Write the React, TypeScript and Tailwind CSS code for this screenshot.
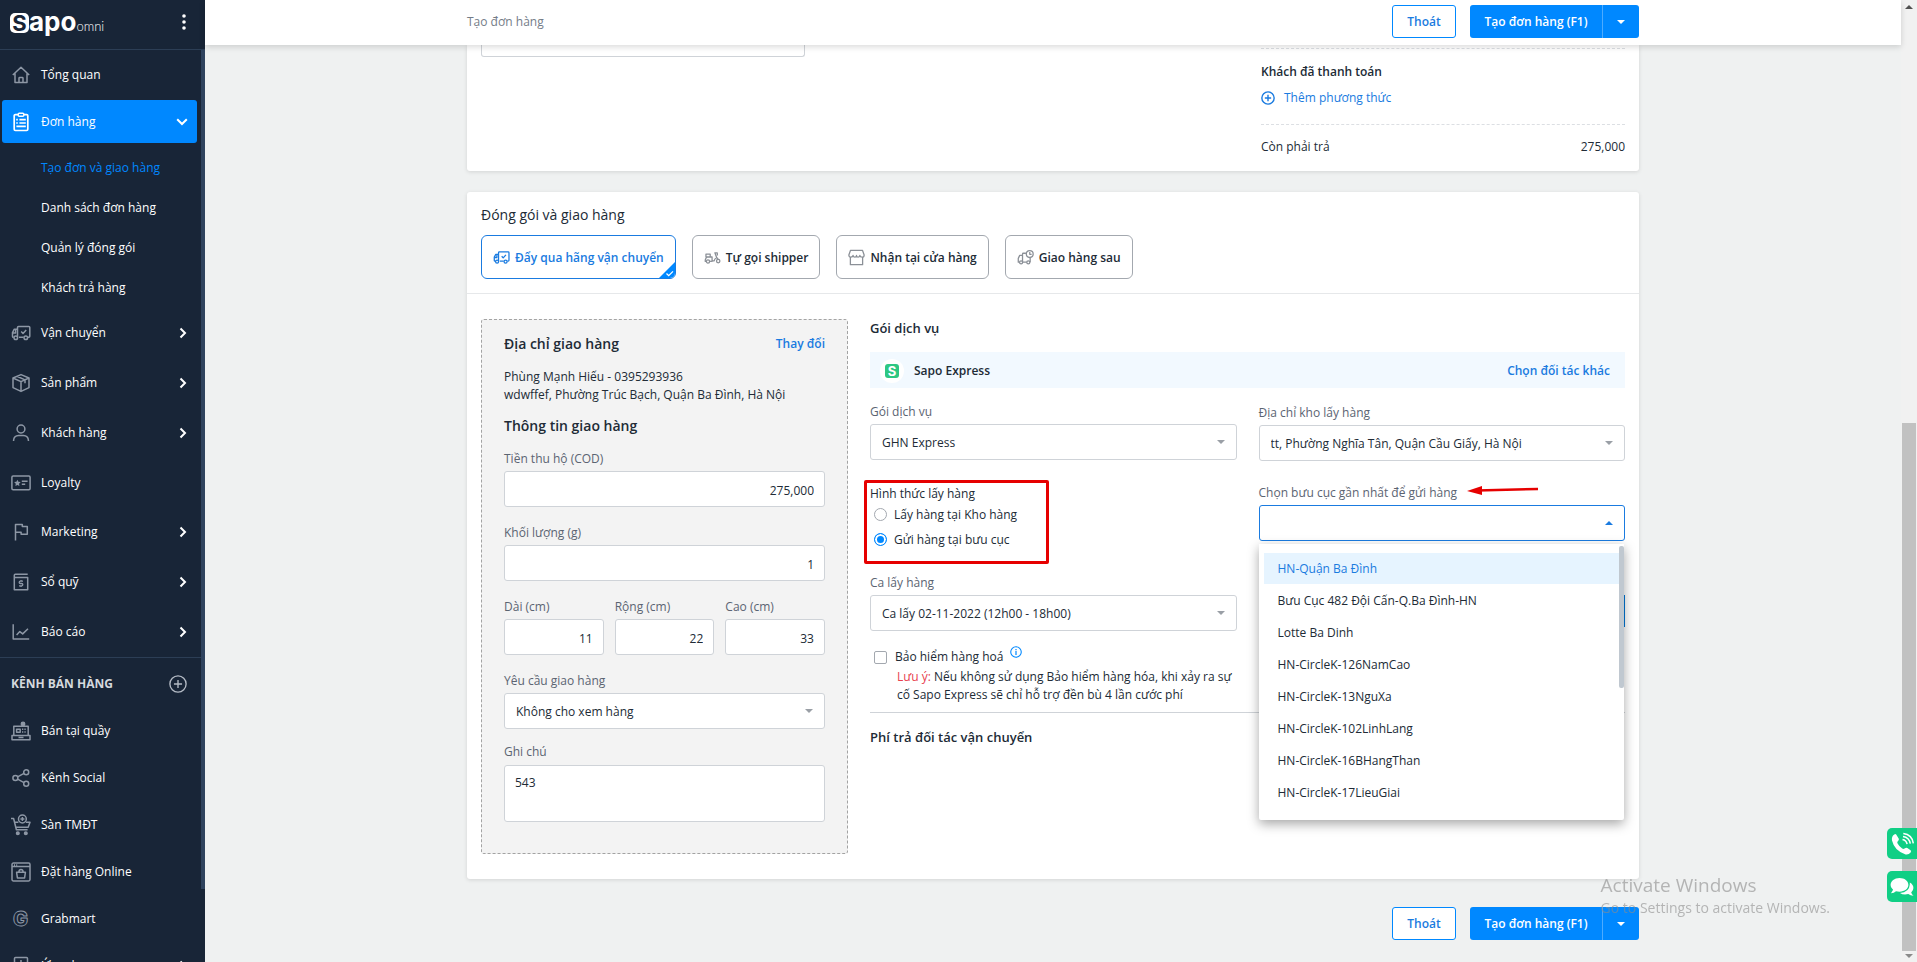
import React, { useState } from 'react';

type IconProps = { children: React.ReactNode; className?: string; box?: string };

const Icon: React.FC<IconProps> = ({ children, className = 'w-5 h-5', box = '0 0 20 20' }) => (
  <svg
    viewBox={box}
    className={`shrink-0 ${className}`}
    fill="none"
    stroke="currentColor"
    strokeWidth="1.5"
    strokeLinejoin="round"
    aria-hidden="true"
  >
    {children}
  </svg>
);

const truckPaths = (
  <>
    <path d="M6.5 14.2V4.4q0-1 1-1h10.3q1 0 1 1v8.8q0 1-1 1h-.8M12.6 14.2H8" />
    <path d="M2.7 14.2H2.3q-.8 0-.8-.8V9.6l1.8-3.4h3.2M2 10h2.6V7" />
    <circle cx="4.8" cy="14.8" r="1.8" />
    <circle cx="14.8" cy="14.8" r="1.8" />
    <path d="m10.2 8.6 1.8 1.9 3.2-3.6" />
  </>
);

const icons = {
  home: (
    <Icon>
      <path d="M1.8 10 10 2.2 18.2 10M4 8.4v9.1h12V8.4M8 17.4v-4.2q0-.7.7-.7h2.6q.7 0 .7.7v4.2" />
    </Icon>
  ),
  order: (
    <Icon>
      <rect x="3.2" y="2.6" width="13.6" height="15.9" rx="1.2" strokeWidth="1.7" />
      <rect x="7.2" y="1.2" width="5.6" height="3" rx="1" fill="#0088ff" />
      <path d="M8.4 7.6h6.4M8.4 11h6.4M5.4 14.4h9.4M5.2 7.6h1.6M5.2 11h1.6" strokeWidth="1.7" />
    </Icon>
  ),
  truck: <Icon>{truckPaths}</Icon>,
  box: (
    <Icon>
      <path d="M10 1.6 18 5v9.6L10 18.4 2 14.6V5zM2 5l8 3.6L18 5M10 8.6v9.8M6 3.3l8 3.6v3.4" />
    </Icon>
  ),
  user: (
    <Icon>
      <circle cx="10" cy="6" r="3.9" />
      <path d="M2.6 18v-1q.4-4.4 5-4.6h4.8q4.6.2 5 4.6v1" />
    </Icon>
  ),
  card: (
    <Icon>
      <rect x=".9" y="3" width="18.2" height="13.8" rx="1.2" />
      <path d="m6.4 6.7 1 2.1 2.3.3-1.7 1.6.4 2.3-2-1.1-2 1.1.4-2.3-1.7-1.6 2.3-.3z" fill="currentColor" stroke="none" />
      <path d="M10.8 8.3h5.8M10.8 11.3h3.4" />
    </Icon>
  ),
  flag: (
    <Icon>
      <path d="M4.5 18.5V2.5h6.8v2h5v7.8h-6.2v-2H4.5" />
    </Icon>
  ),
  fund: (
    <Icon>
      <path d="M3.3 5.4h13.4v12.3H3.3zM3.3 5.4V3.2q0-1 1-1h12.4" />
      <path d="M12 9.2H9.4q-1.2 0-1.2 1.2 0 1.1 1.2 1.1h1.2q1.2 0 1.2 1.1 0 1.2-1.2 1.2H8M10 8v1.2M10 13.800V15" strokeWidth="1.3" />
    </Icon>
  ),
  chart: (
    <Icon>
      <path d="M2.2 2.2v14.9h16M5.6 13l3.2-3.4 2.9 2.3L17 6.700" />
    </Icon>
  ),
  pos: (
    <Icon>
      <path d="M1 14.5h18v4.200H1zM2.800 14.500V5.300h14.400v9.200M7.500 16.600h5" />
      <path d="M5.6 8.200h3.600v3H5.600zM11 8.200h1.300M13.400 8.200h1.300M11 11h1.300M13.400 11h1.300" />
      <circle cx="12" cy="3" r="1.7" fill="currentColor" />
    </Icon>
  ),
  share: (
    <Icon>
      <circle cx="15.2" cy="4.2" r="2.5" />
      <circle cx="4.4" cy="10" r="2.5" />
      <circle cx="15.2" cy="15.8" r="2.5" />
      <path d="m6.6 8.800 6.400-3.400M6.600 11.200l6.400 3.400" />
    </Icon>
  ),
  cart: (
    <Icon className="w-[20px] h-[22px]" box="0 0 20 22">
      <path d="M0 4.500h2.600l2.800 11.200h11.200M3.800 8.200h3.600M15 8.200h4l-1.800 5H5.200" />
      <circle cx="11.4" cy="5" r="3.9" />
      <path d="M11.400 3v4M9.400 5h4" />
      <circle cx="6.8" cy="19.3" r="1.3" fill="currentColor" />
      <circle cx="14.8" cy="19.3" r="1.3" fill="currentColor" />
    </Icon>
  ),
  online: (
    <Icon>
      <rect x="1" y="1" width="18" height="18" rx="1.4" />
      <path d="M1 4.600h18M3 2.900h1M5.200 2.900h1" />
      <path d="M5.600 10.300h8.800l-.8 5.600H6.400zM7.800 10.200q.3-2.600 2.200-2.600t2.200 2.600" />
    </Icon>
  ),
  grab: (
    <Icon className="w-5 h-5 overflow-visible">
      <text x="2" y="17" fontSize="20" fontFamily="Inter, sans-serif" fontWeight="800" strokeWidth="1">G</text>
    </Icon>
  ),
  app: (
    <Icon>
      <rect x="3.5" y="1.5" width="13" height="16" rx="1" />
      <path d="M10 4v8M6 9h8" />
    </Icon>
  ),
};

const ChevronRight = () => (
  <svg viewBox="0 0 8 12" className="w-2 h-3 ml-auto mr-[14px]" fill="none" stroke="white" strokeWidth="2" aria-hidden="true">
    <path d="M1.500 1.500 6 6l-4.500 4.500" />
  </svg>
);

const mainMenu = [
  { label: 'Vận chuyển', icon: icons.truck, more: true },
  { label: 'Sản phẩm', icon: icons.box, more: true },
  { label: 'Khách hàng', icon: icons.user, more: true },
  { label: 'Loyalty', icon: icons.card, more: false },
  { label: 'Marketing', icon: icons.flag, more: true },
  { label: 'Sổ quỹ', icon: icons.fund, more: true },
  { label: 'Báo cáo', icon: icons.chart, more: true },
];

const orderMenu = ['Tạo đơn và giao hàng', 'Danh sách đơn hàng', 'Quản lý đóng gói', 'Khách trả hàng'];

const channels = [
  { label: 'Bán tại quầy', icon: icons.pos, more: false },
  { label: 'Kênh Social', icon: icons.share, more: false },
  { label: 'Sàn TMĐT', icon: icons.cart, more: false },
  { label: 'Đặt hàng Online', icon: icons.online, more: false },
  { label: 'Grabmart', icon: icons.grab, more: false },
  { label: 'Ứng dụng', icon: icons.app, more: true },
];

const postOffices = [
  'HN-Quận Ba Đình',
  'Bưu Cục 482 Đội Cấn-Q.Ba Đình-HN',
  'Lotte Ba Dinh',
  'HN-CircleK-126NamCao',
  'HN-CircleK-13NguXa',
  'HN-CircleK-102LinhLang',
  'HN-CircleK-16BHangThan',
  'HN-CircleK-17LieuGiai',
];

const Sidebar = () => (
  <aside className="w-[205px] shrink-0 bg-[#182537] text-white overflow-hidden flex flex-col">
    <div className="h-[50px] shrink-0 border-b border-[#2c3e55] flex items-center pl-[10px] pr-[19px] pb-[5px]">
      <a href="#home" className="flex items-baseline">
        <span className="w-[19px] h-5 rounded-[5px] bg-white text-[#182537] font-['Inter'] font-bold text-[22px] leading-5 text-center">S</span>
        <span className="font-['Inter'] font-bold text-[26px] leading-6">apo</span>
        <span className="font-['Lato'] font-light text-[13px] leading-4">omni</span>
      </a>
      <button className="ml-auto" aria-label="Menu">
        <svg viewBox="0 0 4 16" className="w-1 h-4" fill="white"><circle cx="2" cy="2" r="1.8" /><circle cx="2" cy="8" r="1.8" /><circle cx="2" cy="14" r="1.8" /></svg>
      </button>
    </div>

    <div className="flex flex-1 min-h-0">
      <nav className="flex-1 min-w-0">
        <a href="#overview" className="flex items-center gap-[10px] h-[50px] pl-[11px]">
          <span className="text-[#8d97a5]">{icons.home}</span>Tổng quan
        </a>
        <a href="#orders" className="flex items-center gap-[10px] h-[43px] ml-[2px] mr-1 pl-[9px] rounded-[3px] bg-[#0088ff]">
          {icons.order}Đơn hàng
          <svg viewBox="0 0 12 8" className="w-3 h-2 ml-auto mr-[9px]" fill="none" stroke="white" strokeWidth="2" aria-hidden="true">
            <path d="M1.200 1.200 6 6l4.800-4.800" />
          </svg>
        </a>
        <div className="pt-[5px]">
          {orderMenu.map((label, i) => (
            <a key={label} href="#order-sub" className={`flex items-center h-10 pl-[41px] ${i === 0 ? 'text-[#0088ff]' : ''}`}>
              {label}
            </a>
          ))}
        </div>
        {mainMenu.map(item => (
          <a key={item.label} href="#menu" className={`flex items-center gap-[10px] pl-[11px] ${item.more ? 'h-[50px]' : 'h-[49px]'}`}>
            <span className="text-[#8d97a5]">{item.icon}</span>
            {item.label}
            {item.more && <ChevronRight />}
          </a>
        ))}
        <div className="flex items-center h-[50px] border-t border-[#2c3e55] pl-[11px] pr-[14px] pt-[2px]">
          <span className="font-bold text-[#d5d9de]">KÊNH BÁN HÀNG</span>
          <button className="ml-auto text-[#b4bbc5]" aria-label="Thêm kênh">
            <Icon className="w-[18px] h-[18px]"><circle cx="10" cy="10" r="9" /><path d="M10 5.500v9M5.500 10h9" /></Icon>
          </button>
        </div>
        {channels.map(item => (
          <a key={item.label} href="#channel" className="flex items-center gap-[10px] h-[47px] pl-[11px]">
            <span className="text-[#8d97a5]">{item.icon}</span>
            {item.label}
            {item.more && <ChevronRight />}
          </a>
        ))}
      </nav>
      <div className="w-1 h-[92%] bg-[#2f435e]"></div>
    </div>
  </aside>
);

const ActionButtons = () => (
  <div className="flex gap-[14px] h-[33px]">
    <button className="w-16 rounded-[3px] border border-[#0088ff] bg-white text-[#1a7be0] font-semibold">Thoát</button>
    <div className="flex rounded-[3px] bg-[#0088ff] text-white">
      <button className="w-[133px] font-semibold border-r border-[#4dabff]">Tạo đơn hàng (F1)</button>
      <button className="w-9 flex items-center justify-center" aria-label="Tùy chọn khác">
        <svg viewBox="0 0 8 4" className="w-2 h-1" fill="white"><path d="M0 0h8L4 4z" /></svg>
      </button>
    </div>
  </div>
);

type FieldProps = { id: string; label: string; value: string };

const TextField: React.FC<FieldProps> = ({ id, label, value }) => (
  <div className="min-w-0">
    <label htmlFor={id} className="block pt-px mb-[3px] text-[#5b6472]">{label}</label>
    <input id={id} defaultValue={value} className="block w-full h-9 rounded-[3px] border border-[#cfd3d8] bg-white px-[10px] pt-[2px] text-right" />
  </div>
);

const SelectField: React.FC<FieldProps & { open?: boolean }> = ({ id, label, value, open }) => (
  <div>
    <label htmlFor={id} className="block pt-px mb-[3px] text-[#5b6472]">{label}</label>
    <div className="relative">
      <select
        id={id}
        className={`block w-full h-9 appearance-none rounded-[3px] border bg-white px-[11px] pt-[2px] ${open ? 'border-[#1a7be0]' : 'border-[#cfd3d8]'}`}
      >
        <option>{value}</option>
      </select>
      <svg
        viewBox="0 0 8 4"
        className={`absolute right-3 top-4 w-2 h-1 pointer-events-none ${open ? 'rotate-180 fill-[#1a7be0]' : 'fill-[#9a9fa6]'}`}
      >
        <path d="M0 0h8L4 4z" />
      </svg>
    </div>
  </div>
);

const deliveryTabs = [
  { label: 'Đẩy qua hãng vận chuyển', icon: <Icon className="w-[17px] h-[17px]">{truckPaths}</Icon> },
  {
    label: 'Tự gọi shipper',
    icon: (
      <Icon className="w-[17px] h-[17px]">
        <path d="M2.300 6h5v3.400h-5zM2.600 14.500H1.400q0-4.600 3.800-5.100h4.300v4.500h2.500q.2-2.600 3-3.600L12.800 4.500h2.800l.2 3.200M15.600 10.400l1 2" />
        <circle cx="4.7" cy="14.6" r="1.9" />
        <circle cx="16.7" cy="14.2" r="2" />
        <path d="M6.600 14.500h3.400" />
      </Icon>
    ),
  },
  {
    label: 'Nhận tại cửa hàng',
    icon: (
      <Icon className="w-[17px] h-[17px]">
        <path d="M3 1.500h14l2 5.500q0 2.600-2.400 2.600T14 7.600q-.4 2-2.200 2T10 7.600q0 2-1.900 2T6 7.600q-.3 2-2.600 2T1 7zM2.800 10v8.500h14.400V10" />
      </Icon>
    ),
  },
  {
    label: 'Giao hàng sau',
    icon: (
      <Icon className="w-[17px] h-[17px]">
        <path d="M10.500 5H7.500q-1 0-1 1v9M2.800 15.500H1.500V11l1.700-3.500h3.300M7 15.500h4.500M15.500 10.500v5" />
        <circle cx="4.8" cy="15.7" r="1.8" />
        <circle cx="13.3" cy="15.7" r="1.8" />
        <circle cx="15" cy="6" r="4" />
        <path d="M15 3.600v2.600h2.200" />
      </Icon>
    ),
  },
];

const App: React.FC = () => {
  const [pickup, setPickup] = useState('office');
  const [insured, setInsured] = useState(false);

  return (
    <div className="flex h-screen overflow-hidden bg-[#eff1f1] font-['Open_Sans','Noto_Sans',sans-serif] text-[12px] leading-[18px] text-[#212b36]">
      <Sidebar />

      <div className="flex-1 min-w-0 flex flex-col">
        <header className="relative z-10 h-[45px] shrink-0 bg-white shadow-[0_2px_6px_rgba(0,0,0,0.15)]">
          <div className="max-w-[1172px] mx-auto flex items-start justify-between pt-[5px]">
            <h1 className="pt-2 text-[#747c87]">Tạo đơn hàng</h1>
            <ActionButtons />
          </div>
        </header>

        <main className="flex-1 min-h-0 overflow-hidden">
          <div className="max-w-[1172px] mx-auto">
            {/* Payment summary */}
            <section className="bg-white rounded-b-[3px] shadow-[0_1px_4px_rgba(0,0,0,0.12)] px-[14px] pb-[14px] flex justify-between items-start">
              <textarea aria-label="Ghi chú đơn hàng" className="block w-[324px] h-3 resize-none rounded-b-[3px] border border-t-0 border-[#cfd3d8]"></textarea>
              <div className="w-[364px] pt-[3px] leading-5">
                <div className="border-t border-dashed border-[#dcdfe3] mb-[13px]"></div>
                <p className="font-semibold">Khách đã thanh toán</p>
                <a href="#payment" className="flex items-center gap-[9px] mt-[6px] text-[#1a7be0]">
                  <Icon className="w-[14px] h-[14px]"><circle cx="10" cy="10" r="8.8" strokeWidth="2" /><path d="M10 5.500v9M5.500 10h9" strokeWidth="2" /></Icon>
                  Thêm phương thức
                </a>
                <div className="flex justify-between mt-4 pt-3 border-t border-dashed border-[#dcdfe3]">
                  <span>Còn phải trả</span>
                  <span>275,000</span>
                </div>
              </div>
            </section>

            {/* Packing and delivery */}
            <section className="mt-[21px] bg-white rounded-[3px] shadow-[0_1px_4px_rgba(0,0,0,0.12)]">
              <div className="px-[14px] pt-[13px] pb-[14px] border-b border-[#e6e8ea]">
                <h2 className="text-[14px] leading-5">Đóng gói và giao hàng</h2>
                <div className="flex gap-4 mt-[10px]">
                  {deliveryTabs.map((tab, i) => (
                    <button
                      key={tab.label}
                      className={`relative flex items-center gap-[5px] h-11 px-[11px] pt-px rounded-[6px] border overflow-hidden font-semibold ${i === 0 ? 'border-[#1a7be0] text-[#1a7be0]' : 'border-[#a3a8af]'}`}
                    >
                      <span className={i === 0 ? '' : 'text-[#8b9097]'}>{tab.icon}</span>
                      {tab.label}
                      {i === 0 && (
                        <svg viewBox="0 0 16 16" className="absolute right-0 bottom-0 w-4 h-4" aria-hidden="true">
                          <path d="M16 0v16H0z" fill="#0088ff" />
                          <path d="m7.500 11.500 2.200 2.200 4.300-4.300" fill="none" stroke="white" strokeWidth="1.3" />
                        </svg>
                      )}
                    </button>
                  ))}
                </div>
              </div>

              <div className="flex items-start gap-[22px] px-[14px] py-[25px]">
                <div className="w-[367px] shrink-0 rounded-[3px] border border-dashed border-[#a3a3a3] bg-[#f3f3f3] px-[22px] pt-[14px] pb-[31px]">
                  <div className="flex justify-between leading-5">
                    <h3 className="text-[14px] font-semibold">Địa chỉ giao hàng</h3>
                    <a href="#change" className="font-semibold text-[#1a7be0]">Thay đổi</a>
                  </div>
                  <p className="mt-[14px]">Phùng Mạnh Hiếu - 0395293936</p>
                  <p>wdwffef, Phường Trúc Bạch, Quận Ba Đình, Hà Nội</p>
                  <h3 className="mt-3 mb-[13px] text-[14px] leading-5 font-semibold">Thông tin giao hàng</h3>
                  <div className="flex flex-col gap-4">
                    <TextField id="cod" label="Tiền thu hộ (COD)" value="275,000" />
                    <TextField id="weight" label="Khối lượng (g)" value="1" />
                    <div className="grid grid-cols-3 gap-[11px]">
                      <TextField id="length" label="Dài (cm)" value="11" />
                      <TextField id="width" label="Rộng (cm)" value="22" />
                      <TextField id="height" label="Cao (cm)" value="33" />
                    </div>
                    <SelectField id="requirement" label="Yêu cầu giao hàng" value="Không cho xem hàng" />
                  </div>
                  <div className="mt-[14px]">
                    <label htmlFor="note" className="block mb-1 text-[#5b6472]">Ghi chú</label>
                    <textarea id="note" defaultValue="543" className="block w-full h-[57px] resize-none rounded-[3px] border border-[#cfd3d8] bg-white px-[10px] pt-2" />
                  </div>
                </div>

                <div className="flex-1 min-w-0">
                  <h3 className="text-[13px] leading-[18px] font-semibold">Gói dịch vụ</h3>
                  <div className="flex items-center h-9 mt-[15px] pl-[10px] pr-[15px] pt-px bg-[#f2f9ff]">
                    <span className="w-6 h-6 rounded-full bg-white flex items-center justify-center">
                      <span className="w-[14px] h-[14px] rounded-[3px] bg-[#2dc783] text-white font-['Inter'] font-bold text-[13px] leading-[14px] text-center">S</span>
                    </span>
                    <span className="ml-[10px] font-semibold">Sapo Express</span>
                    <a href="#partner" className="ml-auto font-semibold text-[#1a7be0]">Chọn đối tác khác</a>
                  </div>

                  <div className="grid grid-cols-2 gap-[22px] mt-[14px]">
                    <div>
                      <SelectField id="package" label="Gói dịch vụ" value="GHN Express" />
                      <div className="relative mt-[26px]">
                        <fieldset>
                          <legend className="leading-4">Hình thức lấy hàng</legend>
                          <label className="flex items-center gap-[7px] h-[25px] pl-1">
                            <input
                              type="radio"
                              name="pickup"
                              checked={pickup === 'store'}
                              onChange={() => setPickup('store')}
                              className="w-[13px] h-[13px] appearance-none rounded-full border border-[#a3a8af] checked:border-[#0088ff] checked:bg-[#0088ff] checked:shadow-[inset_0_0_0_2px_white]"
                            />
                            Lấy hàng tại Kho hàng
                          </label>
                          <label className="flex items-center gap-[7px] h-[25px] pl-1">
                            <input
                              type="radio"
                              name="pickup"
                              checked={pickup === 'office'}
                              onChange={() => setPickup('office')}
                              className="w-[13px] h-[13px] appearance-none rounded-full border border-[#a3a8af] checked:border-[#0088ff] checked:bg-[#0088ff] checked:shadow-[inset_0_0_0_2px_white]"
                            />
                            Gửi hàng tại bưu cục
                          </label>
                        </fieldset>
                        <div className="absolute -left-[6px] -top-[6px] w-[185px] h-[84px] border-[3px] border-[#e60000] rounded-[2px] pointer-events-none"></div>
                      </div>
                      <div className="mt-[21px]">
                        <SelectField id="shift" label="Ca lấy hàng" value="Ca lấy 02-11-2022 (12h00 - 18h00)" />
                      </div>
                      <div className="flex items-center mt-[15px] pl-1">
                        <input
                          id="insurance"
                          type="checkbox"
                          checked={insured}
                          onChange={e => setInsured(e.target.checked)}
                          className="w-[13px] h-[13px] appearance-none rounded-[2px] border border-[#a3a8af] checked:bg-[#0088ff]"
                        />
                        <label htmlFor="insurance" className="ml-2">Bảo hiểm hàng hoá</label>
                        <Icon className="w-3 h-3 ml-[7px] mb-[10px] text-[#0088ff]">
                          <circle cx="10" cy="10" r="8.8" strokeWidth="1.8" /><path d="M10 8.500V15M10 5v2" strokeWidth="2" />
                        </Icon>
                      </div>
                      <p className="ml-[27px]">
                        <span className="text-[#e8424f]">Lưu ý:</span> Nếu không sử dụng Bảo hiểm hàng hóa, khi xảy ra sự cố Sapo Express sẽ chỉ hỗ trợ đền bù 4 lần cước phí
                      </p>
                    </div>

                    <div className="pt-px">
                      <SelectField id="warehouse" label="Địa chỉ kho lấy hàng" value="tt, Phường Nghĩa Tân, Quận Cầu Giấy, Hà Nội" />
                      <div className="relative mt-[22px]">
                        <SelectField id="post-office" label="Chọn bưu cục gần nhất để gửi hàng" value="" open />
                        <svg viewBox="0 0 72 12" className="absolute left-[208px] top-[2px] w-[72px] h-3" aria-hidden="true">
                          <path d="M10 5.500 71 4" stroke="#e60000" strokeWidth="2.5" />
                          <path d="M0 6 15 1v9z" fill="#e60000" />
                        </svg>
                        <ul role="listbox" aria-label="Bưu cục" className="absolute z-10 left-0 right-px top-[61px] h-[276px] py-[9px] pl-[5px] rounded-b-[2px] bg-white shadow-[0_4px_12px_rgba(0,0,0,0.35)]">
                          {postOffices.map((name, i) => (
                            <li
                              key={name}
                              role="option"
                              aria-selected={i === 0}
                              className={`h-[31px] mb-px mr-[5px] pl-[14px] leading-[32px] ${i === 0 ? 'bg-[#e6f4ff] text-[#1a7be0]' : ''}`}
                            >
                              {name}
                            </li>
                          ))}
                          <li aria-hidden="true" className="absolute right-0 top-[2px] w-[5px] h-[142px] rounded-[2px] bg-[#c0c8d0]"></li>
                        </ul>
                      </div>
                      <button aria-label="Tính phí" className="block ml-auto mt-[54px] w-24 h-8 bg-[#0078d8]"></button>
                    </div>
                  </div>

                  <div className="mt-2 pt-[15px] border-t border-[#cfd3d8]">
                    <h3 className="text-[13px] leading-[18px] font-semibold">Phí trả đối tác vận chuyển</h3>
                  </div>
                </div>
              </div>
            </section>

            <div className="flex justify-end mt-7">
              <ActionButtons />
            </div>
          </div>
        </main>
      </div>

      {/* Page scrollbar */}
      <div className="w-4 shrink-0 bg-[#f1f1f1] flex flex-col items-center justify-between py-1">
        <svg viewBox="0 0 8 4" className="w-2 h-1 mt-px fill-[#505050]"><path d="M0 4h8L4 0z" /></svg>
        <div className="w-full flex-1 flex flex-col justify-end px-px pb-[3px]">
          <div className="h-[56%] bg-[#c1c1c1]"></div>
        </div>
        <svg viewBox="0 0 8 4" className="w-2 h-1 fill-[#8a8a8a]"><path d="M0 0h8L4 4z" /></svg>
      </div>

      <div className="fixed z-20 right-0 bottom-[60px] flex flex-col gap-3">
        <button aria-label="Gọi hỗ trợ" className="w-[30px] h-[31px] rounded-l-[5px] bg-[#10cf85] flex items-center justify-center">
          <svg viewBox="0 0 24 24" className="w-6 h-6" fill="white">
            <path d="M6.200 2.600 8.800 6.800Q9.300 7.900 7.800 9.200q-1 .9-.2 2.300 1.700 3.200 4.600 5.100 1.300.8 2.400-.1 1.500-1.200 2.700-.5l3.300 2.300q1 .9 0 2.200-2 2.500-5 1.900Q4.500 19.200 2 8.600 1.300 4.300 4.300 2.400q1.200-.8 1.900.2z" />
            <path d="M12.500 7.500q3.800.6 4.600 4.600M13 4.400q6.200.8 7.300 7.300M13.300 1.400q9 1.200 10 10" fill="none" stroke="white" strokeWidth="1.5" />
          </svg>
        </button>
        <button aria-label="Chat hỗ trợ" className="w-[30px] h-[31px] rounded-l-[5px] bg-[#10cf85] flex items-center justify-center">
          <svg viewBox="0 0 24 24" className="w-6 h-6" fill="white">
            <path d="M9.500 3C4.500 3 .6 6 .6 9.800c0 2 1 3.600 2.500 4.900L1 18.200q3 0 5-1.900 1.700.4 3.500.4c5 0 8.900-3 8.900-6.900S14.500 3 9.500 3z" />
            <path d="M19.800 7.500q3.600 2 3.600 5.500 0 2.700-2.200 4.500.5 1.900 2.300 3.300-3.200 0-5.200-1.800-5 1.200-8.300-1.100 9.300-.6 9.800-8.400z" />
          </svg>
        </button>
      </div>

      <div className="fixed z-20 right-[87px] bottom-[43px] pointer-events-none text-[#8c8c8c]/60">
        <p className="text-[19px] leading-6">Activate Windows</p>
        <p className="text-[14px] leading-[22px]">Go to Settings to activate Windows.</p>
      </div>
    </div>
  );
};

export default App;
